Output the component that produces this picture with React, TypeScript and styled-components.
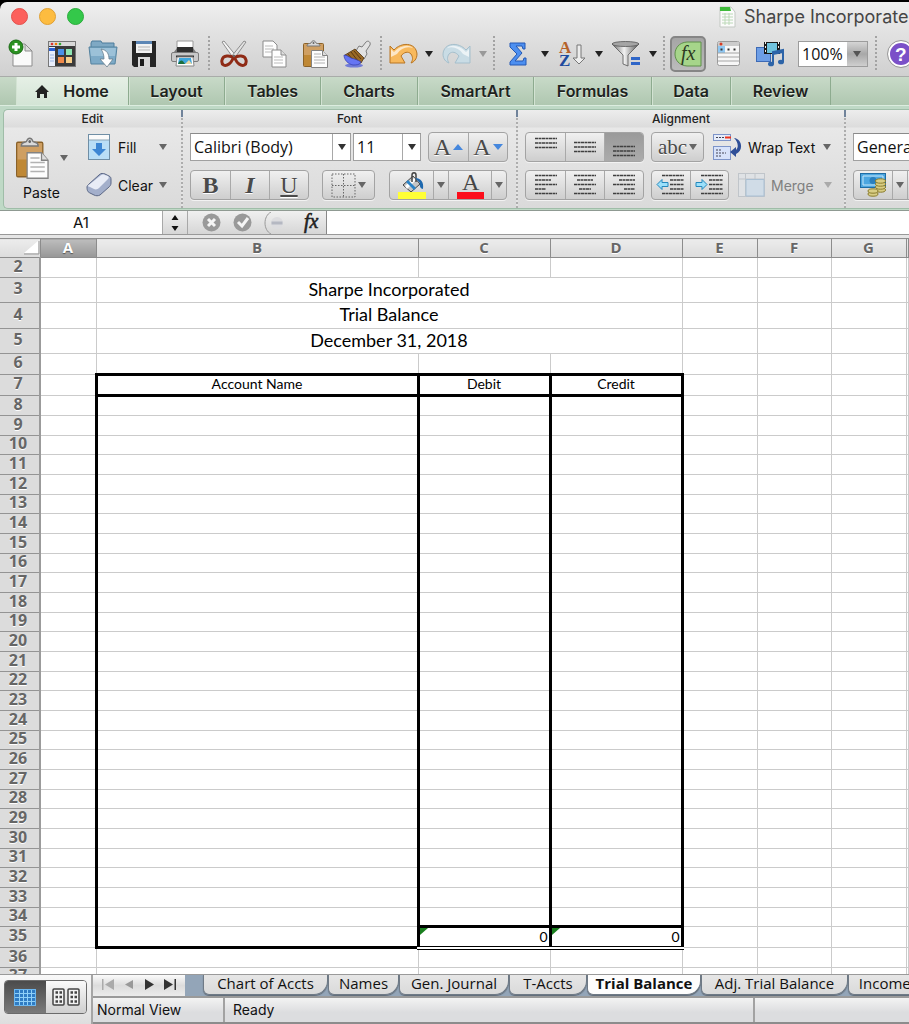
import React from "react";
import styled, { createGlobalStyle, css } from "styled-components";

const ui = `Inter, "Liberation Sans", sans-serif`;
const lucida = `"Open Sans", "Noto Sans", sans-serif`;
const calibri = `Lato, "Open Sans", sans-serif`;

const Global = createGlobalStyle`
  *, *::before, *::after { box-sizing: border-box; }
  html, body { margin: 0; background: #000; }
  button, select, input { font: inherit; color: inherit; margin: 0; padding: 0; border: 0; background: none; border-radius: 0; }
  svg { display: block; flex: none; }
`;

const Window = styled.div`
  height: 100vh;
  display: flex;
  flex-direction: column;
  overflow: hidden;
  font-family: ${ui};
  font-size: 14px;
  color: #111;
  border-top: 2px solid #000;
`;

/* ---------- title bar and standard toolbar ---------- */
const Chrome = styled.header`
  flex: none;
  background: linear-gradient(#efefef, #e2e2e2 40%, #d0d0d0);
  border-radius: 7px 0 0 0;
  border-bottom: 1px solid #a9aca9;
`;
const TitleBar = styled.div`
  height: 29px;
  display: flex;
  align-items: center;
  justify-content: space-between;
  padding-left: 11px;
  overflow: hidden;
`;
const Lights = styled.div`
  display: flex;
  gap: 11px;
`;
const Light = styled.button<{ $c: string; $edge: string }>`
  width: 17px;
  height: 17px;
  border-radius: 50%;
  background: ${(p) => p.$c};
  border: 1px solid ${(p) => p.$edge};
`;
const DocTitle = styled.h1`
  margin: 0;
  width: 190px;
  display: flex;
  align-items: center;
  gap: 8px;
  font-size: 18px;
  line-height: 28px;
  font-weight: 400;
  color: #454545;
  white-space: nowrap;
`;
const Toolbar = styled.div`
  height: 45px;
  display: flex;
  align-items: center;
`;
const Tool = styled.button<{ $w?: number }>`
  flex: none;
  width: ${(p) => p.$w ?? 41}px;
  height: 36px;
  display: flex;
  align-items: center;
  justify-content: center;
`;
const FxTool = styled(Tool)`
  margin: 0 2px;
  border: 2px solid #858585;
  border-radius: 5px;
  background: linear-gradient(#a5a5a5, #bcbcbc);
`;
const Sep = styled.span`
  flex: none;
  width: 2px;
  height: 36px;
  margin: 0 3px;
  background: repeating-linear-gradient(#a3a3a3 0 2px, transparent 2px 4px);
`;
const Zoom = styled.label`
  flex: none;
  display: flex;
  width: 70px;
  height: 26px;
  margin: 0 4px 0 8px;
  background: #fff;
  border: 1px solid #9c9c9c;
`;
const Pick = styled.select`
  appearance: none;
  flex: 1;
  min-width: 0;
  padding-left: 3px;
  font-family: ${lucida};
  font-size: 16px;
  line-height: 20px;
  color: #111;
`;
const ZoomArrow = styled.span`
  width: 20px;
  display: flex;
  align-items: center;
  justify-content: center;
  background: linear-gradient(#d5d5d5, #a8a8a8 50%, #cfcfcf);
`;

/* ---------- ribbon ---------- */
const Tabs = styled.nav`
  flex: none;
  height: 28px;
  display: flex;
  padding-left: 16px;
  background: linear-gradient(#c8dac8, #afc7b0);
`;
const Tab = styled.button<{ $w: number; $on?: boolean }>`
  flex: none;
  width: ${(p) => p.$w}px;
  display: flex;
  align-items: center;
  justify-content: center;
  gap: 14px;
  font-size: 16px;
  font-weight: 600;
  color: #1e231e;
  text-shadow: 0 1px 0 #e3efe3;
  border-right: 1px solid #8dab8f;
  box-shadow: inset 1px 0 0 #d3e3d3;
  ${(p) => p.$on && css`
    background: linear-gradient(#e6f0e6, #d3e4d5);
  `}
`;
const Ribbon = styled.section`
  flex: none;
  padding: 3px 0 1px 3px;
  background: #bfd9c6;
  border-top: 1px solid #dcecdf;
  border-bottom: 1px solid #8f9a92;
`;
const Panel = styled.div`
  display: flex;
  border: 1px solid #9fbda8;
  border-right: 0;
  border-radius: 5px 0 0 5px;
  background: linear-gradient(#ededed, #dcdcdc 17px, #e8e8e8 18px, #dadada);
  overflow: hidden;
`;
const Group = styled.div<{ $w?: number }>`
  flex: ${(p) => (p.$w ? "none" : "1")};
  width: ${(p) => (p.$w ? p.$w + "px" : "auto")};
  min-width: 0;
  height: 98px;
  display: flex;
`;
const GroupInner = styled.div`
  flex: 1;
  min-width: 0;
  display: flex;
  flex-direction: column;
`;
const GroupEnd = styled.span`
  flex: none;
  width: 2px;
  background: linear-gradient(#70839a 0 7px, transparent 7px),
    repeating-linear-gradient(#adadad 0 2px, #e4e4e4 2px 4px);
`;
const GroupName = styled.h2`
  margin: 0;
  height: 18px;
  font-size: 12px;
  line-height: 18px;
  font-weight: 500;
  text-align: center;
  color: #222;
`;
const Rows = styled.div<{ $left?: number }>`
  display: flex;
  flex-direction: column;
  gap: 8px;
  padding: 4px 0 0 ${(p) => p.$left ?? 7}px;
`;
const Row = styled.div`
  height: 30px;
  display: flex;
  align-items: center;
`;
const EditBody = styled.div`
  display: flex;
  padding-left: 6px;
`;
const PasteBtn = styled.button`
  width: 62px;
  height: 76px;
  padding-top: 8px;
  display: grid;
  grid-template-columns: 46px 16px;
  grid-template-rows: 44px 24px;
  align-items: center;
  justify-items: center;
  color: #111;
`;
const PasteWord = styled.span`
  justify-self: start;
  padding-left: 13px;
`;
const TextBtn = styled.button<{ $w: number; $gap?: number; $dim?: boolean }>`
  flex: none;
  height: 30px;
  width: ${(p) => p.$w}px;
  margin-left: ${(p) => p.$gap ?? 0}px;
  display: flex;
  align-items: center;
  gap: 6px;
  white-space: nowrap;
  color: ${(p) => (p.$dim ? "#808080" : "#111")};
`;
const IconSlot = styled.span`
  width: 26px;
  display: flex;
  justify-content: center;
`;
const Word = styled.span`
  flex: 1;
  text-align: left;
`;
const Combo = styled.label<{ $w: number; $gap?: number }>`
  flex: none;
  display: flex;
  width: ${(p) => p.$w}px;
  height: 28px;
  margin-left: ${(p) => p.$gap ?? 0}px;
  background: #fff;
  border: 1px solid #a0a0a0;
  border-top-color: #8a8a8a;
`;
const ComboArrow = styled.span`
  flex: none;
  width: 18px;
  display: flex;
  align-items: center;
  justify-content: center;
  border-left: 1px solid #a8a8a8;
`;
const Seg = styled.div<{ $gap?: number }>`
  flex: none;
  display: flex;
  height: 30px;
  margin-left: ${(p) => p.$gap ?? 0}px;
  border: 1px solid #a3a3a3;
  border-radius: 4px;
  background: linear-gradient(#f0f0f0, #cecece);
  box-shadow: 0 1px 0 #f2f2f2;
  overflow: hidden;
`;
const SegBtn = styled.button<{ $w?: number; $on?: boolean }>`
  width: ${(p) => p.$w ?? 39}px;
  display: flex;
  align-items: center;
  justify-content: center;
  gap: 2px;
  & + & { border-left: 1px solid #a9a9a9; }
  ${(p) => p.$on && css`
    background: linear-gradient(#9a9a9a, #ababab);
  `}
`;
const Glyph = styled.span<{ $b?: boolean; $i?: boolean; $u?: boolean; $size?: number }>`
  font-family: "Liberation Serif", serif;
  font-size: ${(p) => p.$size ?? 24}px;
  line-height: 26px;
  color: #4a4a4a;
  font-weight: ${(p) => (p.$b ? 700 : 400)};
  font-style: ${(p) => (p.$i ? "italic" : "normal")};
  text-decoration: ${(p) => (p.$u ? "underline" : "none")};
  text-shadow: 0 1px 0 #fff;
`;

/* ---------- formula bar ---------- */
const FormulaBar = styled.div`
  flex: none;
  height: 24px;
  display: flex;
  background: linear-gradient(#f0f0f0, #d6d6d6);
  border-bottom: 1px solid #999;
`;
const NameBox = styled.input`
  width: 162px;
  background: #fff;
  text-align: center;
  font-size: 15px;
  font-family: ${ui};
`;
const Stepper = styled.button`
  width: 26px;
  display: flex;
  align-items: center;
  justify-content: center;
  border-left: 1px solid #a8a8a8;
  border-right: 1px solid #a8a8a8;
`;
const FormulaTools = styled.div`
  width: 139px;
  display: flex;
  align-items: center;
  justify-content: space-between;
  padding: 0 3px 0 14px;
  border-right: 1px solid #888;
`;
const FormulaBtn = styled.button`
  display: flex;
`;
const FormulaInput = styled.input`
  flex: 1;
  min-width: 0;
  background: #fff;
`;

/* ---------- sheet ---------- */
const Sheet = styled.main`
  flex: 1;
  min-height: 0;
  overflow: hidden;
  background: #fff;
  border-top: 3px solid #e6e6e6;
`;
const Grid = styled.table`
  width: 100%;
  table-layout: fixed;
  border-collapse: collapse;
  font-family: ${calibri};
  font-size: 14px;
  line-height: 14px;
  color: #000;
`;
const Col = styled.col<{ $w?: number }>`
  width: ${(p) => (p.$w ? p.$w + "px" : "auto")};
`;
const Line = styled.tr<{ $h: number }>`
  height: ${(p) => p.$h}px;
`;
const headText = css`
  padding: 0;
  font-family: ${lucida};
  font-weight: 700;
  color: #666;
  text-shadow: 0 1px 0 #fff;
`;
const ColHead = styled.th<{ $on?: boolean }>`
  ${headText}
  font-size: 15px;
  line-height: 14px;
  padding-bottom: 2px;
  background: linear-gradient(#ececec, #dcdcdc);
  border-top: 1px solid #8f8f8f;
  border-right: 1px solid #8c8c8c;
  border-bottom: 1px solid #8c8c8c;
  ${(p) => p.$on && css`
    color: #fff;
    text-shadow: 0 1px 1px #555;
    background: linear-gradient(#bdbdbd, #979797);
  `}
`;
const Corner = styled(ColHead)`
  vertical-align: bottom;
  svg { margin-left: auto; }
`;
const RowHead = styled.th`
  ${headText}
  font-size: 16px;
  line-height: 14px;
  padding: 0 3px 4px 0;
  background: #dcdcdc;
  border-right: 2px solid #9b9b9b;
  border-bottom: 1px solid #949494;
`;
type Edge = { $t?: boolean; $r?: boolean; $b?: boolean; $l?: boolean; $dbl?: boolean };
const thick = "3px solid #000";
const Cell = styled.td<Edge>`
  padding: 0 1px 2px;
  border: 1px solid #cbcbcb;
  text-align: center;
  ${(p) => p.$t && `border-top: ${thick};`}
  ${(p) => p.$r && `border-right: ${thick};`}
  ${(p) => p.$b && `border-bottom: ${thick};`}
  ${(p) => p.$l && `border-left: ${thick};`}
  ${(p) => p.$dbl && `border-bottom: 4px double #000;`}
`;
const Heading = styled(Cell)`
  font-size: 18px;
  line-height: 20px;
  padding-bottom: 3px;
`;
const Total = styled(Cell)`
  position: relative;
  padding-bottom: 0;
  text-align: right;
  &::before {
    content: "";
    position: absolute;
    left: 0;
    top: 0;
    border-top: 7px solid #1a7f1f;
    border-right: 8px solid transparent;
  }
`;

/* ---------- footer ---------- */
const Footer = styled.footer`
  flex: none;
  height: 50px;
  display: flex;
  background: #ececec;
  border-top: 1px solid #9a9a9a;
`;
const Views = styled.div`
  flex: none;
  width: 93px;
  padding: 5px 0 0 4px;
  border-right: 2px solid #a5a5a5;
  background: linear-gradient(#f8f8f8, #dedede);
`;
const ViewSeg = styled.div`
  display: flex;
  width: 83px;
  height: 34px;
  border: 1px solid #6b6b6b;
  border-radius: 4px;
  overflow: hidden;
`;
const ViewBtn = styled.button<{ $on?: boolean }>`
  flex: 1;
  display: flex;
  align-items: center;
  justify-content: center;
  background: ${(p) => (p.$on ? "linear-gradient(#4b4b4b, #7a7a7a)" : "linear-gradient(#fafafa, #cfcfcf)")};
`;
const Right = styled.div`
  flex: 1;
  min-width: 0;
  display: flex;
  flex-direction: column;
`;
const SheetTabs = styled.div`
  height: 24px;
  display: flex;
  overflow: hidden;
  background: #93a5b8;
  border-bottom: 2px solid #9a9a9a;
`;
const Nav = styled.div`
  flex: none;
  width: 92px;
  margin-right: 18px;
  padding: 0 8px 2px;
  display: flex;
  align-items: center;
  justify-content: space-between;
  background: linear-gradient(#fbfbfb, #dcdcdc 50%, #ececec);
`;
const NavBtn = styled.button`
  display: flex;
`;
const SheetTab = styled.button<{ $w: number; $on?: boolean }>`
  flex: none;
  width: ${(p) => p.$w}px;
  height: 20px;
  white-space: nowrap;
  font-family: ${lucida};
  font-size: 15px;
  line-height: 14px;
  padding-bottom: 4px;
  color: #111;
  font-weight: ${(p) => (p.$on ? 700 : 400)};
  background: ${(p) => (p.$on ? "#fdfdfd" : "linear-gradient(#e6e6e6, #dadada)")};
  border: solid #6f7a86;
  border-width: 0 1px 1px 1px;
  border-radius: 0 0 14px 6px;
  box-shadow: 0 1px 1px #5f6a76;
`;
const Status = styled.div`
  flex: 1;
  display: flex;
  border-bottom: 2px solid #8c8c8c;
  background: linear-gradient(#f3f3f3, #dcdddf 60%, #dcdddf);
  font-size: 14px;
  line-height: 24px;
`;
const StatusCell = styled.div<{ $w?: number; $pad?: number }>`
  flex: ${(p) => (p.$w ? "none" : "1")};
  width: ${(p) => (p.$w ? p.$w + "px" : "auto")};
  padding-left: ${(p) => p.$pad ?? 4}px;
  border-right: 2px solid #a2a2a2;
  white-space: nowrap;
`;
const StatusEnd = styled.div`
  flex: none;
  width: 154px;
`;

/* ---------- drawings ---------- */
const Caret = ({ c = "#222", w = 8 }: { c?: string; w?: number }) => (
  <svg width={w} height="6" viewBox="0 0 8 6"><path d="M0 0h8L4 6z" fill={c} /></svg>
);
const NewDoc = () => (
  <svg width="26" height="30" viewBox="0 0 26 30">
    <path d="M5 5h12l7 7v15H5z" fill="#fafafa" stroke="#8d8d8d" />
    <path d="M17 5v7h7z" fill="#ddd" stroke="#8d8d8d" />
    <circle cx="8" cy="8" r="7" fill="#2a9121" stroke="#1a6a14" />
    <path d="M8 4v8M4 8h8" stroke="#fff" strokeWidth="3" />
  </svg>
);
const Gallery = () => (
  <svg width="28" height="26" viewBox="0 0 28 26">
    <rect x=".5" y=".5" width="27" height="25" fill="#3b3b3b" stroke="#777" />
    <path d="M1 1h26v4H1z" fill="#d9d9d9" />
    <circle cx="4" cy="3" r="1.3" fill="#d33" /><circle cx="8" cy="3" r="1.3" fill="#e70" /><circle cx="12" cy="3" r="1.3" fill="#3a3" />
    <path d="M1 6h6v19H1z" fill="#e8eefb" /><path d="M1 7h6v3H1z" fill="#2c62d6" /><path d="M2 14h4M2 17h4M2 20h4" stroke="#9bb6e6" />
    <path d="M10 8h6v6h-6z" fill="#4a90e8" /><path d="M18 8h6v6h-6z" fill="#8ee6b4" />
    <path d="M10 16h6v6h-6z" fill="#f08a4a" /><path d="M18 16h6v6h-6z" fill="#f7cf8a" />
  </svg>
);
const OpenFolder = () => (
  <svg width="30" height="28" viewBox="0 0 30 28">
    <path d="M3 3l1-2h9l1 2h12v6H3z" fill="#7fa9c4" stroke="#4d7d9c" />
    <path d="M1 7h28l-2 17H3z" fill="#7daac7" stroke="#55839f" />
    <path d="M2 8h26l-1 8H3z" fill="#9cc1d8" />
    <path d="M13 9c6 1 8 5 8 10h4l-6 8-7-8h4c0-4-1-7-3-10z" fill="#fff" stroke="#6a7f8d" strokeWidth=".8" />
  </svg>
);
const Save = () => (
  <svg width="26" height="26" viewBox="0 0 26 26">
    <path d="M1 0h24v26H3l-2-2z" fill="#262626" />
    <path d="M5 0h16v12H5z" fill="#f2f2f2" /><path d="M5 0h16v3H5z" fill="#5c86b5" /><path d="M7 6h12M7 9h12" stroke="#b5b5b5" />
    <path d="M7 16h12v10H7z" fill="#d9d9d9" /><path d="M9 18h4v7H9z" fill="#1d1d1d" />
  </svg>
);
const Print = () => (
  <svg width="28" height="27" viewBox="0 0 28 27">
    <path d="M6 1h16v11H6z" fill="#fff" stroke="#999" />
    <path d="M3 12l3-4h16l3 4z" fill="#777" /><path d="M6 7h16v6H6z" fill="#303030" />
    <rect x=".5" y="12.500" width="27" height="9" rx="1.500" fill="#c9c9c9" stroke="#7b7b7b" />
    <path d="M5 16.500h18" stroke="#333" strokeWidth="2" />
    <path d="M6 17h16l1 9H5z" fill="#fff" stroke="#888" /><path d="M8 18h12l1 6H7z" fill="#3fa6dc" /><path d="M7 24c3-6 5-3 7 0z" fill="#1c6f3d" /><path d="M14 24l4-4 3 4z" fill="#e9d9a5" />
  </svg>
);
const Scissors = () => (
  <svg width="28" height="28" viewBox="0 0 28 28">
    <path d="M2 2l2-1 13 16-3 2z" fill="#f5f5f5" stroke="#777" strokeWidth=".8" />
    <path d="M26 2l-2-1L11 17l3 2z" fill="#e2e2e2" stroke="#777" strokeWidth=".8" />
    <path d="M14 18c-4-3-11-3-12 2s3 7 7 4 2-4 5-6z" fill="none" stroke="#8f2b16" strokeWidth="3" />
    <path d="M14 18c4-3 11-3 12 2s-3 7-7 4-2-4-5-6z" fill="none" stroke="#8f2b16" strokeWidth="3" />
    <circle cx="14" cy="16" r="1.200" fill="#666" />
  </svg>
);
const Copy = () => (
  <svg width="26" height="28" viewBox="0 0 26 28">
    <path d="M1 1h10l4 4v12H1z" fill="#fdfdfd" stroke="#8b8b8b" /><path d="M3 6h8M3 9h9M3 12h9" stroke="#bbb" />
    <path d="M10 10h9l5 5v12H10z" fill="#fff" stroke="#8b8b8b" /><path d="M19 10v5h5" fill="#ddd" stroke="#8b8b8b" />
    <path d="M12 17h9M12 20h9M12 23h9" stroke="#bbb" />
  </svg>
);
const Clipboard = ({ w = 26, h = 28 }: { w?: number; h?: number }) => (
  <svg width={w} height={h} viewBox="0 0 26 28" preserveAspectRatio="none">
    <rect x=".5" y="3.500" width="20" height="23" rx="1" fill="#cf9f62" stroke="#8a6128" />
    <path d="M1 15h19v11H1z" fill="#b87f22" opacity=".7" />
    <path d="M4 6c0-3 3-2 4-3 1-3 4-3 5 0 1 1 4 0 4 3z" fill="#d9d9d9" stroke="#777" />
    <circle cx="10.500" cy="3" r="1" fill="#666" />
    <path d="M8.500 10.500h11l5 5v12h-16z" fill="#fdfdfd" stroke="#838383" /><path d="M19.500 10.500v5h5" fill="#ddd" stroke="#838383" />
    <path d="M11 14h7M11 17h11M11 20h11M11 23h11" stroke="#b2b2b2" />
  </svg>
);
const Brush = () => (
  <svg width="28" height="28" viewBox="0 0 28 28">
    <ellipse cx="11" cy="25.500" rx="9" ry="2" fill="#5865d8" opacity=".8" />
    <path d="M14 9l2-3 3 1 4-5c2-2 5 0 4 3l-4 6 1 3-3 5-8-7z" fill="#e2e2e2" stroke="#7c7c7c" />
    <path d="M12 9l9 9-3 5-8-1-8-7z" fill="#9a6a26" stroke="#4f3310" strokeWidth=".8" />
    <path d="M11 11l7 8M8 12l7 9M5 14l6 7" stroke="#5a3810" />
    <path d="M1 15c3 0 5 2 7 3 4 1 7 2 10 4-1 3-5 3-8 3-5-1-9-5-9-10z" fill="#6675f3" stroke="#3039a8" strokeWidth=".7" />
  </svg>
);
const Undo = ({ dim }: { dim?: boolean }) => (
  <svg width="30" height="22" viewBox="0 0 30 22">
    <g transform={dim ? "translate(30 0) scale(-1 1)" : undefined}>
      <path d="M1 3l4 4C12-1 27-1 28 11c0 5-3 8-6 9 2-3 2-6 0-9-3-3-7-2-10 2l4 7H1z" fill={dim ? "#c9dce5" : "#f8b95c"} stroke={dim ? "#a5bfcc" : "#b87522"} />
      <path d="M2 6l3 3C11 2 20 1 24 5 18 3 12 5 8 11L2 14z" fill="#fff" opacity=".65" />
    </g>
  </svg>
);
const Sigma = () => (
  <svg width="18" height="24" viewBox="0 0 18 24">
    <path d="M1 1h15v6h-2l-1-3H7l6 7-7 8h8l1-3h2v7H1v-3l7-8-7-7z" fill="#4d8ff0" stroke="#2459b5" />
  </svg>
);
const SvgText = styled.text`
  font-family: "Liberation Serif", serif;
  font-weight: 700;
  font-size: 17px;
`;
const Sort = () => (
  <svg width="28" height="28" viewBox="0 0 28 28">
    <SvgText x="1" y="13" fill="#b5622a">A</SvgText><SvgText x="1" y="26" fill="#1f4b9e">Z</SvgText>
    <path d="M19 5h4v13h4l-6 6-6-6h4z" fill="#ededed" stroke="#777" />
  </svg>
);
const Funnel = () => (
  <svg width="30" height="26" viewBox="0 0 30 26">
    <defs><linearGradient id="fn"><stop offset="0" stopColor="#666" /><stop offset=".45" stopColor="#f2f2f2" /><stop offset="1" stopColor="#555" /></linearGradient></defs>
    <path d="M1 3l11 11v9l5 2V14L28 3z" fill="url(#fn)" stroke="#555" strokeWidth=".8" />
    <ellipse cx="14.500" cy="3" rx="13.500" ry="2.500" fill="#a5a5a5" stroke="#555" strokeWidth=".8" />
    <path d="M20 16h9v3h-9zM20 21h9v3h-9z" fill="#2f66c8" />
  </svg>
);
const FxText = styled.text`
  font-family: "Liberation Serif", serif;
  font-style: italic;
  font-size: 20px;
`;
const FxIcon = () => (
  <svg width="28" height="26" viewBox="0 0 28 26">
    <path d="M13 1h14v24H13C-3 24-3 2 13 1z" fill="#a6d58a" stroke="#5f8f4a" />
    <FxText x="7" y="19" fill="#2d3a22">fx</FxText>
  </svg>
);
const Toolbox = () => (
  <svg width="23" height="25" viewBox="0 0 23 25">
    <rect x=".5" y=".5" width="22" height="24" rx="2" fill="#f7f7f7" stroke="#9a9a9a" />
    <path d="M1 1h21v4H1z" fill="#ccc" /><circle cx="4" cy="3" r="1.500" fill="#d63a22" />
    <path d="M1 5h7v7H1z" fill="#8fc7f2" /><path d="M3.500 8.500h2M10.500 8.500h2M16.500 8.500h2" stroke="#333" strokeWidth="2" />
    <path d="M1 12h21M1 16h21M1 20h21" stroke="#a5a5a5" />
  </svg>
);
const Media = () => (
  <svg width="28" height="26" viewBox="0 0 28 26">
    <rect x=".5" y="6.500" width="14" height="14" fill="#6d9ee6" stroke="#3d6ab5" />
    <path d="M8 1h16v12H8z" fill="#1a1a1a" /><path d="M11 2h10v10H11z" fill="#70c3de" />
    <path d="M9.500 1v12M22.500 1v12" stroke="#eee" strokeDasharray="2 2" />
    <path d="M17 23V11l10-2v12" fill="none" stroke="#2d64a8" strokeWidth="2" /><path d="M17 11l10-2v3l-10 2z" fill="#2d64a8" />
    <ellipse cx="15" cy="23" rx="3" ry="2.300" fill="#2d64a8" /><ellipse cx="25" cy="21" rx="3" ry="2.300" fill="#2d64a8" />
  </svg>
);
const QText = styled.text`
  font-family: "Liberation Sans", sans-serif;
  font-weight: 700;
  font-size: 19px;
`;
const Help = () => (
  <svg width="28" height="28" viewBox="0 0 28 28">
    <circle cx="14" cy="14" r="12" fill="#7b50c8" stroke="#fff" strokeWidth="2" /><circle cx="14" cy="14" r="13.500" fill="none" stroke="#999" />
    <QText x="8" y="21" fill="#fff">?</QText>
  </svg>
);
const DocIcon = () => (
  <svg width="17" height="22" viewBox="0 0 17 22">
    <path d="M1 1h11l4 5v15H1z" fill="#fbfbfb" stroke="#c3c9c3" /><path d="M1 1h10l1 4H1z" fill="#3fbb3a" />
    <path d="M3 8h11M3 11h11M3 14h11M3 17h11M6 7v12M10 7v12" stroke="#bcd9b8" />
  </svg>
);
const Home = () => (
  <svg width="14" height="13" viewBox="0 0 14 13"><path d="M7 0l7 7h-2v6H9V9H5v4H2V7H0z" fill="#222" /></svg>
);
const FillIcon = () => (
  <svg width="22" height="26" viewBox="0 0 22 26">
    <rect x=".5" y=".5" width="21" height="25" fill="#b9def6" stroke="#6f8ea5" /><path d="M1 1h20v5H1z" fill="#fafafa" /><path d="M1 6h20" stroke="#8ba4b5" />
    <path d="M8 9h6v6h4l-7 7-7-7h4z" fill="#3d86d3" />
  </svg>
);
const Eraser = () => (
  <svg width="26" height="24" viewBox="0 0 26 24">
    <path d="M1 14c0-1 1-2 2-3L13 2c2-2 4-2 6-1l4 2c2 1 2 2 2 4v3c0 2-1 3-2 4l-9 8c-2 1-4 1-6 0l-4-2c-2-1-3-2-3-6z" fill="#a3afcb" stroke="#5b6785" />
    <path d="M2 13c0-1 1-1 2-2L14 3c1-1 3-2 5-1l3 1c1 1 1 2 0 3l-9 9c-1 1-3 2-5 1l-4-2c-1 0-2-1-2-1z" fill="#e8ecf6" />
  </svg>
);
const Borders = () => (
  <svg width="25" height="25" viewBox="0 0 25 25">
    <path d="M1 1h23v23H1zM12.500 1v23M1 12.500h23" fill="none" stroke="#666" strokeDasharray="1.500 1.500" />
  </svg>
);
const Bucket = () => (
  <svg width="28" height="28" viewBox="0 0 28 28">
    <path d="M5 14L15 5l7 8-9 8z" fill="#c5c5c5" stroke="#444" /><path d="M7 15l9-8 2 2-9 9z" fill="#fff" /><path d="M10 9l8 8-2 2-8-8z" fill="#2a83c8" />
    <path d="M14 11V4c0-3 4-3 4 0v7" fill="none" stroke="#444" strokeWidth="1.500" />
    <path d="M17 7c6 0 9 4 8 11-2 0-4-3-3-6z" fill="#1e68ae" />
    <path d="M0 21h28v7H0z" fill="#ffff37" />
  </svg>
);
const InkText = styled.text`
  font-family: "Liberation Serif", serif;
  font-size: 24px;
`;
const FontColor = () => (
  <svg width="27" height="28" viewBox="0 0 27 28">
    <InkText x="5" y="19" fill="#444">A</InkText><path d="M0 21h27v7H0z" fill="#fc0d1b" />
  </svg>
);
const Tri = ({ up }: { up?: boolean }) => (
  <svg width="10" height="6" viewBox="0 0 10 6"><path d={up ? "M0 6h10L5 0z" : "M0 0h10L5 6z"} fill="#4587dd" /></svg>
);
const Lines = ({ w, top = 0 }: { w: number[][]; top?: number }) => (
  <svg width="24" height="24" viewBox="0 0 24 24">
    {w.map(([a, b], i) => (
      <path key={i} d={`M${a} ${top + 2.5 + i * 4.5}H${b}`} stroke="#3f3f3f" strokeWidth="1.500" strokeDasharray="3 .5" />
    ))}
  </svg>
);
const V3 = [[1, 23], [1, 23], [1, 23]];
const Indent = ({ out }: { out?: boolean }) => (
  <svg width="30" height="24" viewBox="0 0 30 24">
    <path d="M6 2.500h22M14 7h14M14 11.500h14M14 16h14M6 20.500h22" stroke="#3f3f3f" strokeWidth="1.500" strokeDasharray="3 .5" />
    <path d={out ? "M1 11.500l5-5v3h6v4H6v3z" : "M12 11.500l-5-5v3H1v4h6v3z"} fill="#9be0fb" stroke="#2488bd" />
  </svg>
);
const Wrap = () => (
  <svg width="29" height="28" viewBox="0 0 29 28">
    <rect x=".5" y="1.500" width="17" height="6" fill="#e5ecfa" stroke="#7d94c9" /><path d="M3 4.500h8" stroke="#445" strokeDasharray="2 1" /><path d="M12 4.500h6" stroke="#f0341c" strokeWidth="2" />
    <rect x=".5" y="13.500" width="17" height="13" fill="#d7e2fa" stroke="#7d94c9" /><path d="M3 17h6M3 20h10M3 23h6" stroke="#445" strokeDasharray="2 1" />
    <path d="M21 5c8 1 10 12 2 16v3l-6-5 6-5v3c3-3 2-8-2-12z" fill="#2f4f98" />
  </svg>
);
const MergeIcon = () => (
  <svg width="27" height="24" viewBox="0 0 27 24">
    <rect x=".5" y=".5" width="26" height="23" fill="#dfe2e5" stroke="#c0c5ca" /><path d="M1 6h26M7.500 0v24M17 0v6" stroke="#c0c5ca" /><path d="M8 6.500h18v16.500H8z" fill="#d0dce7" stroke="#aac0d3" />
  </svg>
);
const Money = () => (
  <svg width="27" height="24" viewBox="0 0 27 24">
    <rect x=".5" y=".5" width="25" height="14" fill="#4ca6e0" stroke="#1f6da5" /><path d="M3 3h20v9H3z" fill="none" stroke="#c6e8fb" /><circle cx="13" cy="7.500" r="3.500" fill="#2a7fbd" />
    {[17, 14, 11, 8].map((y) => <ellipse key={y} cx="20.500" cy={y} rx="5" ry="2.200" fill="#d8cd85" stroke="#8a7c2c" />)}
    {[21, 18].map((y) => <ellipse key={y} cx="13" cy={y} rx="5" ry="2.200" fill="#d8cd85" stroke="#8a7c2c" />)}
  </svg>
);
const Round = ({ d }: { d: string }) => (
  <svg width="19" height="19" viewBox="0 0 19 19"><circle cx="9.500" cy="9.500" r="9" fill="#999" /><path d={d} stroke="#f5f5f5" strokeWidth="3" fill="none" /></svg>
);
const Pill = () => (
  <svg width="26" height="22" viewBox="0 0 26 22">
    <path d="M8 0C0 4 0 18 8 22" fill="none" stroke="#999" /><circle cx="14" cy="11" r="6" fill="#dcdcdf" /><path d="M8.500 11h11" stroke="#b5b8c2" strokeWidth="3" />
  </svg>
);
const FormulaFx = () => (
  <svg width="22" height="22" viewBox="0 0 22 22"><FxText x="3" y="16" fill="#222" stroke="#222" strokeWidth=".6">fx</FxText></svg>
);
const UpDown = () => (
  <svg width="8" height="16" viewBox="0 0 8 16"><path d="M4 0l3.500 5h-7zM4 16l3.500-5h-7z" fill="#111" /></svg>
);
const NavIcon = ({ d, c }: { d: string; c: string }) => (
  <svg width="14" height="11" viewBox="0 0 14 11"><path d={d} fill={c} /></svg>
);
const GridView = () => (
  <svg width="22" height="17" viewBox="0 0 22 17">
    <rect x=".5" y=".5" width="21" height="16" fill="#2f7cc4" stroke="#6bb7f0" />
    <path d="M1 4.500h20M1 8.500h20M1 12.500h20M5.500 1v15M9.500 1v15M13.500 1v15M17.500 1v15" stroke="#8fd0f8" />
  </svg>
);
const PageView = () => (
  <svg width="28" height="18" viewBox="0 0 28 18">
    {[0, 15].map((x) => (
      <g key={x} transform={`translate(${x} 0)`}>
        <rect x="1" y="1" width="11" height="16" rx="1" fill="#f3f3f3" stroke="#444" strokeWidth="1.500" />
        <path d="M3.500 4.500h2.500M7.500 4.500h2.500M3.500 9h2.500M7.500 9h2.500M3.500 13.500h2.500M7.500 13.500h2.500" stroke="#444" strokeWidth="2.500" />
      </g>
    ))}
  </svg>
);

/* ---------- data ---------- */
const ribbonTabs: [string, number][] = [
  ["Home", 113], ["Layout", 96], ["Tables", 96], ["Charts", 97], ["SmartArt", 116],
  ["Formulas", 118], ["Data", 79], ["Review", 100],
];
const sheetTabs: [string, number][] = [
  ["Chart of Accts", 125], ["Names", 71], ["Gen. Journal", 110], ["T-Accts", 78],
  ["Trial Balance", 114], ["Adj. Trial Balance", 147], ["Income Statement", 150],
];
const columns: [string, number?][] = [
  ["A", 56], ["B", 322], ["C", 132], ["D", 132], ["E", 75], ["F", 74], ["G", 75], [""],
];
const titles: Record<number, string> = { 3: "Sharpe Incorporated", 4: "Trial Balance", 5: "December 31, 2018" };
const heights: Record<number, number> = { 2: 20, 3: 25, 4: 26, 5: 25, 6: 21, 7: 21, 35: 21, 36: 20 };
const rowHeight = (n: number) => heights[n] ?? (n % 3 === 1 ? 19 : 20);

function SheetRow({ n }: { n: number }) {
  const rest = [0, 1, 2, 3].map((i) => <Cell key={i} />);
  let body: React.ReactNode;
  if (titles[n]) body = <Heading colSpan={3}>{titles[n]}</Heading>;
  else if (n === 7)
    body = (
      <>
        <Cell $t $r $b $l>Account Name</Cell>
        <Cell $t $r $b>Debit</Cell>
        <Cell $t $r $b>Credit</Cell>
      </>
    );
  else if (n > 7 && n < 35) body = <><Cell $l $r /><Cell $r /><Cell $r /></>;
  else if (n === 35) body = <><Cell $l $r $b /><Total $t $r $dbl>0</Total><Total $t $r $dbl>0</Total></>;
  else body = <><Cell /><Cell /><Cell /></>;
  return (
    <Line $h={rowHeight(n)}>
      <RowHead scope="row">{n}</RowHead>
      <Cell />
      {body}
      {rest}
    </Line>
  );
}

export default function App() {
  return (
    <Window>
      <Global />
      <Chrome>
        <TitleBar>
          <Lights>
            <Light aria-label="Close" $c="#fc605c" $edge="#e2514d" />
            <Light aria-label="Minimize" $c="#fdbc40" $edge="#e0a033" />
            <Light aria-label="Zoom window" $c="#34c84a" $edge="#2aad3c" />
          </Lights>
          <DocTitle><DocIcon />Sharpe Incorporated</DocTitle>
        </TitleBar>
        <Toolbar>
          <Tool aria-label="New"><NewDoc /></Tool>
          <Tool aria-label="Gallery"><Gallery /></Tool>
          <Tool aria-label="Open"><OpenFolder /></Tool>
          <Tool aria-label="Save"><Save /></Tool>
          <Tool aria-label="Print"><Print /></Tool>
          <Sep />
          <Tool aria-label="Cut"><Scissors /></Tool>
          <Tool aria-label="Copy"><Copy /></Tool>
          <Tool aria-label="Paste"><Clipboard /></Tool>
          <Tool aria-label="Format painter"><Brush /></Tool>
          <Sep />
          <Tool aria-label="Undo" $w={37}><Undo /></Tool>
          <Tool aria-label="Undo list" $w={14}><Caret /></Tool>
          <Tool aria-label="Redo" $w={40}><Undo dim /></Tool>
          <Tool aria-label="Redo list" $w={14}><Caret c="#999" /></Tool>
          <Sep />
          <Tool aria-label="Sum" $w={40}><Sigma /></Tool>
          <Tool aria-label="Sum list" $w={14}><Caret /></Tool>
          <Tool aria-label="Sort" $w={40}><Sort /></Tool>
          <Tool aria-label="Sort list" $w={14}><Caret /></Tool>
          <Tool aria-label="Filter" $w={40}><Funnel /></Tool>
          <Tool aria-label="Filter list" $w={14}><Caret /></Tool>
          <Sep />
          <FxTool aria-label="Formula builder" $w={36}><FxIcon /></FxTool>
          <Tool aria-label="Toolbox"><Toolbox /></Tool>
          <Tool aria-label="Media"><Media /></Tool>
          <Zoom>
            <Pick aria-label="Zoom"><option>100%</option></Pick>
            <ZoomArrow><Caret c="#555" w={10} /></ZoomArrow>
          </Zoom>
          <Sep />
          <Tool aria-label="Help"><Help /></Tool>
        </Toolbar>
      </Chrome>

      <Tabs>
        {ribbonTabs.map(([t, w], i) => (
          <Tab key={t} $w={w} $on={i === 0}>{i === 0 && <Home />}{t}</Tab>
        ))}
      </Tabs>

      <Ribbon>
        <Panel>
          <Group $w={179}>
            <GroupInner>
              <GroupName>Edit</GroupName>
              <EditBody>
                <PasteBtn>
                  <Clipboard w={34} h={42} />
                  <Caret c="#666" />
                  <PasteWord>Paste</PasteWord>
                </PasteBtn>
                <Rows $left={14}>
                  <Row><TextBtn $w={81}><IconSlot><FillIcon /></IconSlot><Word>Fill</Word><Caret c="#666" /></TextBtn></Row>
                  <Row><TextBtn $w={81}><IconSlot><Eraser /></IconSlot><Word>Clear</Word><Caret c="#666" /></TextBtn></Row>
                </Rows>
              </EditBody>
            </GroupInner>
            <GroupEnd />
          </Group>
          <Group $w={335}>
            <GroupInner>
              <GroupName>Font</GroupName>
              <Rows>
                <Row>
                  <Combo $w={161}>
                    <Pick aria-label="Font"><option>Calibri (Body)</option></Pick>
                    <ComboArrow><Caret c="#333" /></ComboArrow>
                  </Combo>
                  <Combo $w={68} $gap={2}>
                    <Pick aria-label="Font size"><option>11</option></Pick>
                    <ComboArrow><Caret c="#333" /></ComboArrow>
                  </Combo>
                  <Seg $gap={7}>
                    <SegBtn aria-label="Grow font"><Glyph>A</Glyph><Tri up /></SegBtn>
                    <SegBtn aria-label="Shrink font"><Glyph>A</Glyph><Tri /></SegBtn>
                  </Seg>
                </Row>
                <Row>
                  <Seg>
                    <SegBtn><Glyph $b>B</Glyph></SegBtn>
                    <SegBtn><Glyph $b $i>I</Glyph></SegBtn>
                    <SegBtn><Glyph $u>U</Glyph></SegBtn>
                  </Seg>
                  <Seg $gap={13}><SegBtn aria-label="Borders" $w={51}><Borders /><Caret c="#666" /></SegBtn></Seg>
                  <Seg $gap={14}>
                    <SegBtn aria-label="Fill color" $w={43}><Bucket /></SegBtn>
                    <SegBtn aria-label="Fill color list" $w={15}><Caret c="#666" /></SegBtn>
                    <SegBtn aria-label="Font color" $w={43}><FontColor /></SegBtn>
                    <SegBtn aria-label="Font color list" $w={15}><Caret c="#666" /></SegBtn>
                  </Seg>
                </Row>
              </Rows>
            </GroupInner>
            <GroupEnd />
          </Group>
          <Group $w={328}>
            <GroupInner>
              <GroupName>Alignment</GroupName>
              <Rows>
                <Row>
                  <Seg>
                    <SegBtn aria-label="Top"><Lines w={V3} top={1} /></SegBtn>
                    <SegBtn aria-label="Middle"><Lines w={V3} top={5} /></SegBtn>
                    <SegBtn aria-label="Bottom" $on><Lines w={V3} top={9} /></SegBtn>
                  </Seg>
                  <Seg $gap={7}><SegBtn $w={51}><Glyph $size={21}>abc</Glyph><Caret c="#666" /></SegBtn></Seg>
                  <TextBtn $w={118} $gap={9}><Wrap /><Word>Wrap Text</Word><Caret c="#666" /></TextBtn>
                </Row>
                <Row>
                  <Seg>
                    <SegBtn aria-label="Left"><Lines w={[[1, 23], [1, 17], [1, 23], [1, 12], [1, 23]]} /></SegBtn>
                    <SegBtn aria-label="Center"><Lines w={[[1, 23], [4, 20], [1, 23], [6, 18], [1, 23]]} /></SegBtn>
                    <SegBtn aria-label="Right"><Lines w={[[1, 23], [7, 23], [1, 23], [12, 23], [1, 23]]} /></SegBtn>
                  </Seg>
                  <Seg $gap={7}>
                    <SegBtn aria-label="Decrease indent" $w={38}><Indent out /></SegBtn>
                    <SegBtn aria-label="Increase indent" $w={38}><Indent /></SegBtn>
                  </Seg>
                  <TextBtn $w={94} $gap={9} $dim><MergeIcon /><Word>Merge</Word><Caret c="#aaa" /></TextBtn>
                </Row>
              </Rows>
            </GroupInner>
            <GroupEnd />
          </Group>
          <Group>
            <GroupInner>
              <GroupName />
              <Rows>
                <Row>
                  <Combo $w={150}><Pick aria-label="Number format"><option>General</option></Pick></Combo>
                </Row>
                <Row>
                  <Seg>
                    <SegBtn aria-label="Currency" $w={38}><Money /></SegBtn>
                    <SegBtn aria-label="Currency list" $w={15}><Caret c="#666" /></SegBtn>
                    <SegBtn aria-label="Percent" />
                  </Seg>
                </Row>
              </Rows>
            </GroupInner>
          </Group>
        </Panel>
      </Ribbon>

      <FormulaBar>
        <NameBox aria-label="Name box" defaultValue="A1" />
        <Stepper aria-label="Names"><UpDown /></Stepper>
        <FormulaTools>
          <FormulaBtn aria-label="Cancel"><Round d="M6 6l7 7M13 6l-7 7" /></FormulaBtn>
          <FormulaBtn aria-label="Enter"><Round d="M5 9l4 4 6-8" /></FormulaBtn>
          <FormulaBtn aria-label="Collapse"><Pill /></FormulaBtn>
          <FormulaBtn aria-label="Function"><FormulaFx /></FormulaBtn>
        </FormulaTools>
        <FormulaInput aria-label="Formula" />
      </FormulaBar>

      <Sheet>
        <Grid>
          <colgroup>
            <Col $w={40} />
            {columns.map(([, w], i) => <Col key={i} $w={w} />)}
          </colgroup>
          <thead>
            <Line $h={19}>
              <Corner>
                <svg width="18" height="14" viewBox="0 0 18 14"><path d="M16 0v12H2z" fill="#fff" /><path d="M17 0v13H2" fill="none" stroke="#999" /></svg>
              </Corner>
              {columns.map(([c], i) => <ColHead key={i} scope="col" $on={c === "A"}>{c}</ColHead>)}
            </Line>
          </thead>
          <tbody>
            {Array.from({ length: 36 }, (_, i) => <SheetRow key={i} n={i + 2} />)}
          </tbody>
        </Grid>
      </Sheet>

      <Footer>
        <Views>
          <ViewSeg>
            <ViewBtn aria-label="Normal view" $on><GridView /></ViewBtn>
            <ViewBtn aria-label="Page layout view"><PageView /></ViewBtn>
          </ViewSeg>
        </Views>
        <Right>
          <SheetTabs>
            <Nav>
              <NavBtn aria-label="First sheet"><NavIcon c="#aaa" d="M1 0h1.500v11H1zM13 0v11L4 5.500z" /></NavBtn>
              <NavBtn aria-label="Previous sheet"><NavIcon c="#999" d="M11 1v9L3 5.500z" /></NavBtn>
              <NavBtn aria-label="Next sheet"><NavIcon c="#333" d="M3 0v11l9-5.500z" /></NavBtn>
              <NavBtn aria-label="Last sheet"><NavIcon c="#333" d="M1 0v11l9-5.500zM11.500 0H13v11h-1.500z" /></NavBtn>
            </Nav>
            {sheetTabs.map(([t, w]) => <SheetTab key={t} $w={w} $on={t === "Trial Balance"}>{t}</SheetTab>)}
          </SheetTabs>
          <Status>
            <StatusCell $w={132}>Normal View</StatusCell>
            <StatusCell $pad={8}>Ready</StatusCell>
            <StatusEnd />
          </Status>
        </Right>
      </Footer>
    </Window>
  );
}
